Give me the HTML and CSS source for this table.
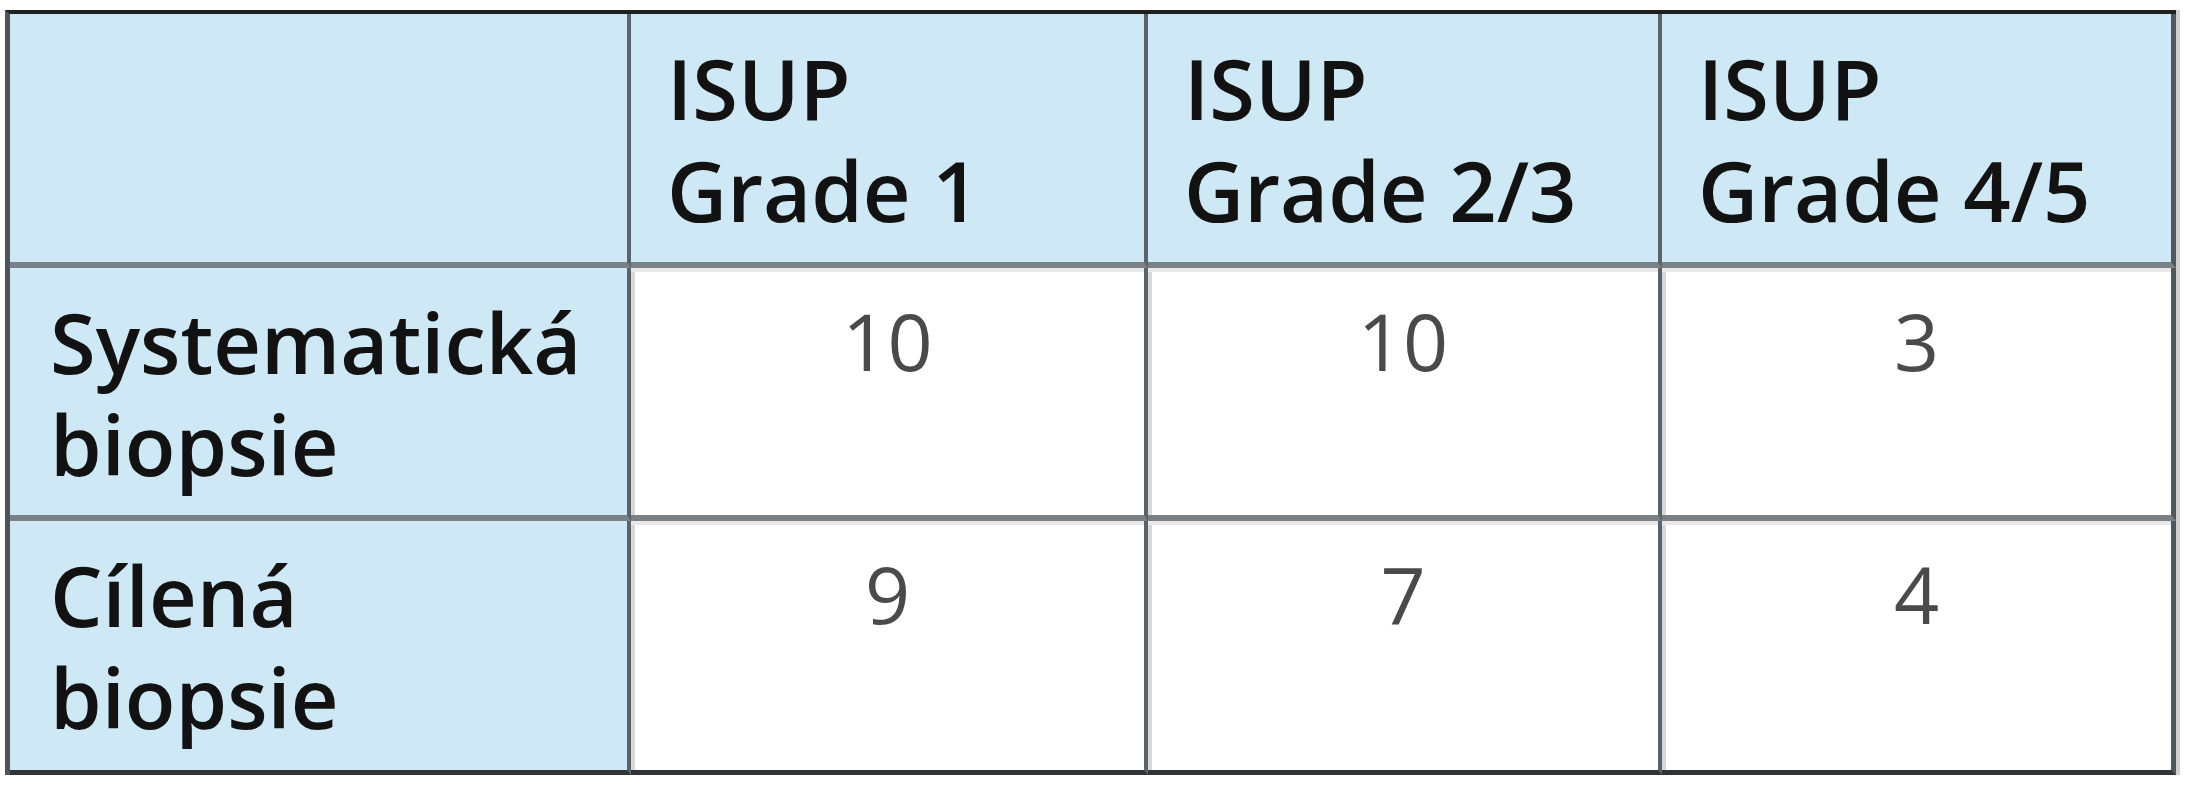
FILE: index.html
```html
<!DOCTYPE html>
<html lang="cs">
<head>
<meta charset="utf-8">
<title>ISUP Grade</title>
<link rel="stylesheet" href="styles.css">
</head>
<body>
<div class="page">
  <div class="grid">
    <div class="cell head corner"></div>
    <div class="cell head">ISUP<br>Grade 1</div>
    <div class="cell head">ISUP<br>Grade 2/3</div>
    <div class="cell head last">ISUP<br>Grade 4/5</div>

    <div class="cell label">Systematická<br>biopsie</div>
    <div class="cell num">10</div>
    <div class="cell num">10</div>
    <div class="cell num last">3</div>

    <div class="cell label bottom">Cílená<br>biopsie</div>
    <div class="cell num bottom">9</div>
    <div class="cell num bottom">7</div>
    <div class="cell num bottom last">4</div>
  </div>
</div>
</body>
</html>
```
FILE: styles.css
```css
html, body {
  margin: 0;
  padding: 0;
  background: #ffffff;
}

.page {
  padding: 10px 0 0 5px;
}

.grid {
  display: grid;
  grid-template-columns: 621px 517px 514px 514px;
  grid-template-rows: 254px 253px 254px;
  width: 2171px;
  box-sizing: border-box;
  border-top: 4px solid #202020;
  border-left: 5px solid #4e5458;
  font-family: "Open Sans", "Noto Sans", sans-serif;
  box-shadow: 0 4px 0 #e2e2e2, 4px 0 0 #d0d0d0;
}

.cell {
  box-sizing: border-box;
  border-right: 4px solid #5a6369;
  border-bottom: 6px solid #798186;
  padding: 23px 20px 0 36px;
  font-size: 83px;
  line-height: 102px;
  background: #ffffff;
}

.head,
.label {
  background: #cfe8f5;
  color: #121212;
  font-weight: 600;
}

.label {
  padding-left: 40px;
}

.num {
  text-align: center;
  color: #4a4a4a;
  font-weight: 400;
  font-size: 79px;
  padding: 22px 0 0 0;
  box-shadow: inset 0 4px 0 #e8e8e8, inset 4px 0 0 #d8d8d8;
}

.last {
  border-right-width: 5px;
  border-right-color: #50585d;
}

.bottom {
  border-bottom: 5px solid #303436;
}
```
